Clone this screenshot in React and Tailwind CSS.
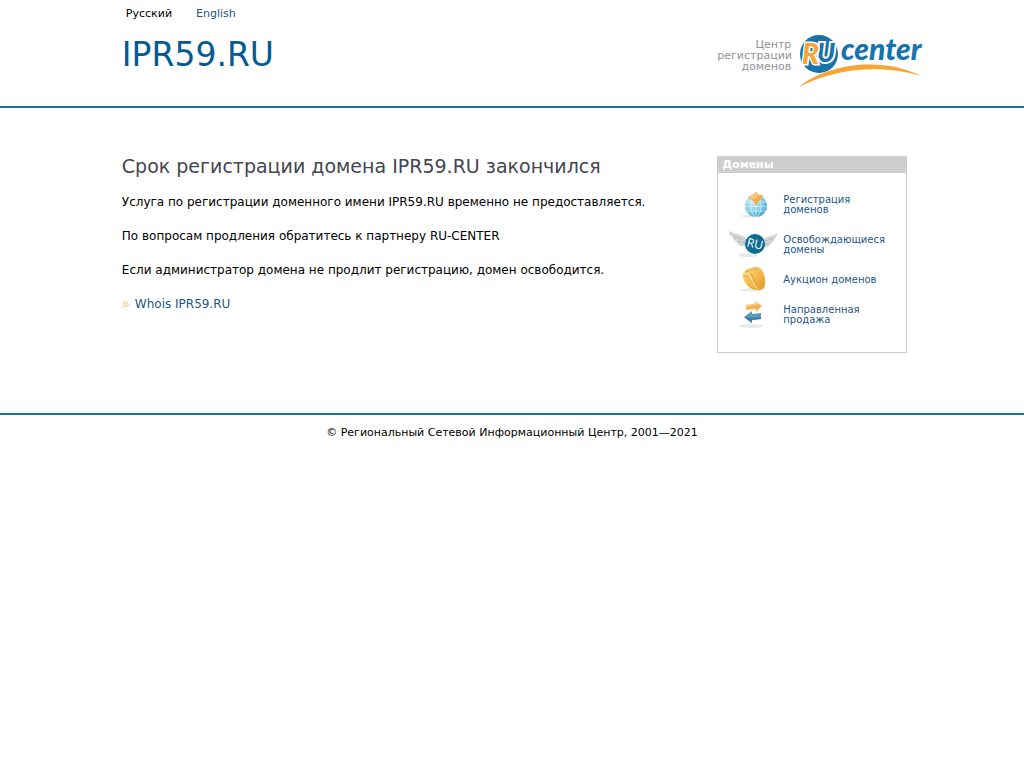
import { useId } from "react";

function Logo() {
  return (
    <svg width="132" height="64" viewBox="0 -8 132 64" role="img" aria-label="RU-CENTER">
      <circle cx="20" cy="22" r="19" fill="#1873aa" />
      <g fontFamily="Lato, sans-serif" fontWeight="900" fontStyle="italic">
        <text x="18" y="30" fontSize="26" fill="#1873aa" stroke="#fff" strokeWidth="4" paintOrder="stroke">U</text>
        <text x="3" y="32" fontSize="28" fill="#f9a535" stroke="#fff" strokeWidth="3" paintOrder="stroke">R</text>
        <text x="42" y="28" fontSize="30" fill="#1873aa">center</text>
      </g>
      <path d="M0 55 C30 30 86 25 122 44 C84 32 36 36 0 55Z" fill="#f9a535" />
    </svg>
  );
}

function GlobeIcon() {
  const id = useId();
  return (
    <svg width="50" height="30" viewBox="0 0 50 30" aria-hidden="true">
      <defs>
        <radialGradient id={id} cx="0.35" cy="0.3" r="0.8">
          <stop offset="0" stopColor="#d4f0f8" />
          <stop offset="0.6" stopColor="#7cc9e2" />
          <stop offset="1" stopColor="#3b9fc4" />
        </radialGradient>
      </defs>
      <ellipse cx="23" cy="26" rx="10" ry="1.500" fill="#e9e9e9" />
      <circle cx="28" cy="16" r="11" fill={`url(#${id})`} />
      <g fill="none" stroke="#e3f6fb" strokeWidth="0.6">
        <ellipse cx="28" cy="16" rx="5" ry="11" />
        <path d="M28 5v22M18 12h20M17 16.500h22M18 21h20" />
      </g>
      <path d="M28 2l3 3 4 0-2 4-5 6-4-5-4-3 4-2z" fill="#f0ae4c" />
      <path d="M28 2l3 3-5 5-6-3 4-2z" fill="#f8c77a" />
    </svg>
  );
}

function WingsIcon() {
  return (
    <svg width="50" height="30" viewBox="0 0 50 30" aria-hidden="true">
      <ellipse cx="20" cy="25" rx="10" ry="2" fill="#e9e9e9" />
      <path d="M19 10C15 4 10 5 1 1c0 5 4 6 4 6 0 4 4 5 4 5 1 4 5 4 5 4l4 1z" fill="#d5d5d5" />
      <path d="M34 11c4-6 8-3 15-8 0 5-3 6-3 6 0 4-4 5-4 5-1 4-5 3-5 3l-4 1z" fill="#d5d5d5" />
      <g fill="none" stroke="#b4b4b4" strokeWidth="0.8">
        <path d="M5 7c5 0 9 1 12 5M9 12c3-1 6 0 8 2" />
        <path d="M46 9c-5 0-8 1-11 4M42 14c-3-1-5 0-7 2" />
      </g>
      <circle cx="27" cy="14" r="10" fill="#0c6c93" />
      <text
        x="27"
        y="18"
        textAnchor="middle"
        fontSize="12"
        fontFamily="'Open Sans', sans-serif"
        fill="#fff"
        transform="rotate(12 27 14)"
      >
        RU
      </text>
    </svg>
  );
}

function CoinsIcon() {
  const id = useId();
  return (
    <svg width="50" height="30" viewBox="0 0 50 30" aria-hidden="true">
      <defs>
        <linearGradient id={id} x1="0" y1="0" x2="1" y2="1">
          <stop offset="0" stopColor="#ffdf8e" />
          <stop offset="0.6" stopColor="#f2b343" />
          <stop offset="1" stopColor="#e09a2c" />
        </linearGradient>
      </defs>
      <ellipse cx="22" cy="25" rx="10" ry="1.500" fill="#e9e9e9" />
      <path
        d="M15 8C18 3 26 1 30 2c6 2 8 13 7 18-1 6-7 6-13 4-6-3-10-10-9-16z"
        fill={`url(#${id})`}
      />
      <g fill="none" strokeWidth="0.8">
        <path d="M15 12c3-3 8-1 12 11M18 6c3-1 8 5 10 17" stroke="#d9952f" />
        <path d="M21 6c1 8 5 13 9 18M17 9c5 0 8 7 10 14" stroke="#ffe7a5" />
        <path d="M18 7c4-2 9-3 12-3" stroke="#e0a03c" />
      </g>
    </svg>
  );
}

function ArrowsIcon() {
  return (
    <svg width="50" height="30" viewBox="0 0 50 30" aria-hidden="true">
      <ellipse cx="23" cy="26" rx="12" ry="2" fill="#e9e9e9" />
      <path d="M18 5l9-1V1l7 5-6 6V9l-10 1z" fill="#f3b553" />
      <path d="M18 5l9-1V1l4 3-13 3z" fill="#fbd083" />
      <path d="M16 17l8-6v3l9-1v6l-9 1v3z" fill="#5a9cc0" />
      <path d="M16 17l8 1 9-1v2l-9 1v3z" fill="#3a7da5" />
    </svg>
  );
}

const services = [
  { icon: GlobeIcon, lines: ["Регистрация", "доменов"] },
  { icon: WingsIcon, lines: ["Освобождающиеся", "домены"] },
  { icon: CoinsIcon, lines: ["Аукцион доменов"] },
  { icon: ArrowsIcon, lines: ["Направленная", "продажа"] },
];

export default function App() {
  return (
    <div className="min-h-screen bg-white text-black font-[Verdana,'DejaVu_Sans',sans-serif]">

      {/* header */}
      <header className="flex h-[108px] border-b-2 border-[#1a70a3] pl-[11.9%]">
        <div className="flex-1">
          <nav className="flex gap-6 pt-1.5 pl-1 text-[11px] leading-4">
            <span>Русский</span>
            <a href="#en" className="text-[#1c5688]">English</a>
          </nav>
          <h1 className="mt-[13px] text-[33px] leading-10 text-[#045b93]">IPR59.RU</h1>
        </div>

        <a href="#home" className="flex w-[34%] shrink-0 gap-2 pt-6">
          <span className="w-[74px] pt-[15px] text-right text-[11px] leading-[11px] text-[#92929a]">
            Центр регистрации доменов
          </span>
          <Logo />
        </a>
      </header>

      {/* content */}
      <div className="flex border-b-2 border-[#1a70a3] pt-12 pb-[60px] pl-[11.9%]">
        <main className="flex-1 text-[12px] leading-[14px]">
          <h2 className="text-[19px] leading-5 text-[#454550]">
            Срок регистрации домена IPR59.RU закончился
          </h2>
          <div className="mt-[19px] space-y-5">
            <p>Услуга по регистрации доменного имени IPR59.RU временно не предоставляется.</p>
            <p>По вопросам продления обратитесь к партнеру RU-CENTER</p>
            <p>Если администратор домена не продлит регистрацию, домен освободится.</p>
            <p className="flex items-center gap-1.5">
              <svg width="7" height="7" viewBox="0 0 7 7" fill="none" stroke="#e5b65c" aria-hidden="true">
                <path d="M0.500 0.500l3 3-3 3M3.500 0.500l3 3-3 3" />
              </svg>
              <a href="#whois" className="text-[#1c5688]">Whois IPR59.RU</a>
            </p>
          </div>
        </main>

        <div className="w-[34%] shrink-0">
          <aside className="w-[190px] border border-t-0 border-[#cecece]">
            <h3 className="bg-[#cecece] pl-1 text-[11px] leading-[17px] font-bold text-white">Домены</h3>
            <ul className="pt-3 pb-[17px] pl-[10px] text-[10px] leading-[10px]">
              {services.map(({ icon: Icon, lines }) => (
                <li key={lines[0]}>
                  <a href="#service" className="flex items-center gap-[5px] text-[#1c5688]">
                    <Icon />
                    <span className="py-[10px]">
                      {lines.map((line) => (
                        <span key={line} className="block whitespace-nowrap">{line}</span>
                      ))}
                    </span>
                  </a>
                </li>
              ))}
            </ul>
          </aside>
        </div>
      </div>

      {/* footer */}
      <footer className="pt-2 text-center text-[11px] leading-5">
        © Региональный Сетевой Информационный Центр, 2001—2021
      </footer>
    </div>
  );
}
